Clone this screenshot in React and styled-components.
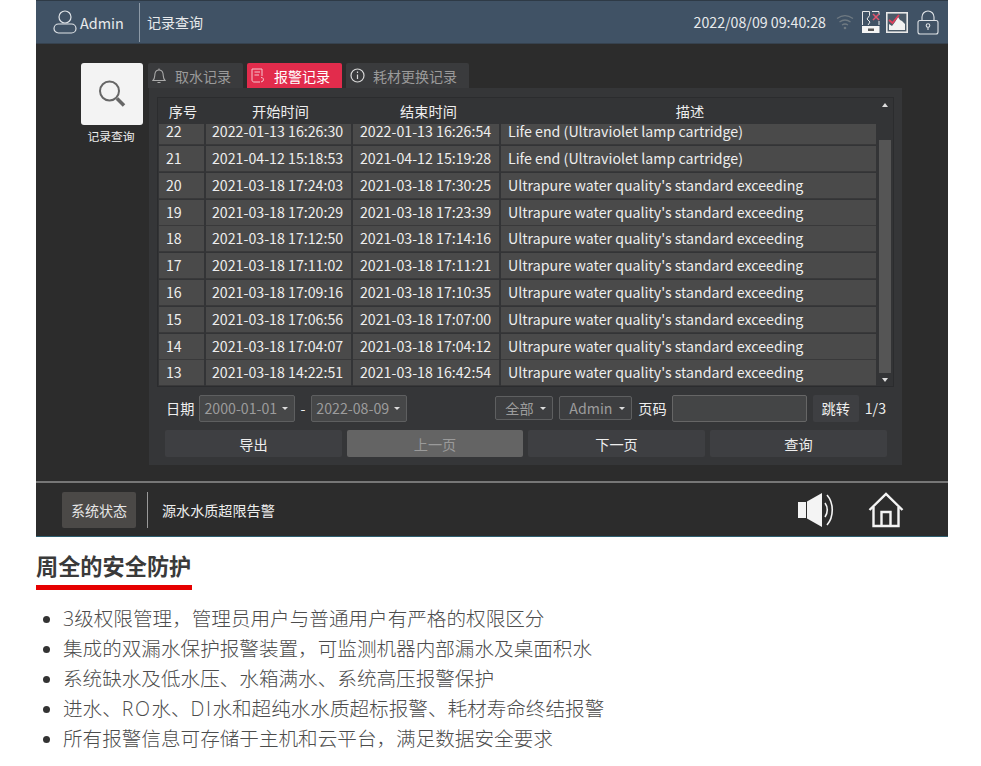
import React from "react";
import styled, { createGlobalStyle } from "styled-components";

const Global = createGlobalStyle`
  html, body { margin: 0; padding: 0; background: #fff; }
  body { font-family: "Noto Sans CJK SC", "Noto Sans", sans-serif; }
  * { box-sizing: border-box; }
`;

const Page = styled.div`width: 981px; height: 766px; overflow: hidden; background: #fff;`;
const Screen = styled.div`
  margin-left: 36px; width: 912px; height: 537px; background: #2c2c2c;
  display: flex; flex-direction: column; border-bottom: 1px solid #2f5f70;
`;
const Header = styled.header`
  height: 44px; flex: none; background: #405265; border-top: 1px solid #2e3a46; border-bottom: 1px solid #36424f;
  display: flex; align-items: center; color: #e8eaec; font-size: 14px;
`;
const UserBox = styled.div`
  width: 104px; height: 39px; padding-left: 17px; display: flex; align-items: center; gap: 3px;
  border-right: 1px solid #8d9aa7; font-size: 14.4px;
`;
const HeaderTitle = styled.div`margin-left: 7px; flex: 1; font-size: 14px;`;
const Clock = styled.div`font-size: 14.2px; margin-right: 10px;`;
const StatusIcons = styled.div`display: flex; align-items: center; margin-right: 9px;`;
const Main = styled.main`flex: 1; display: flex; padding: 19px 0 0 45px; min-height: 0;`;
const Side = styled.div`width: 62px; flex: none; display: flex; flex-direction: column; align-items: center;`;
const SearchTile = styled.div`
  width: 62px; height: 62px; background: #f3f3f3; border-radius: 3px; display: flex; align-items: center; justify-content: center;
`;
const SideLabel = styled.div`color: #eee; font-size: 11.8px; line-height: 14px; margin-top: 4px; margin-left: -2px;`;
const Content = styled.div`margin-left: 5px; width: 755px;`;
const Tabs = styled.div`display: flex; gap: 4px; height: 25px;`;
const Tab = styled.div`
  width: ${p => p.$w}px; height: 25px; border-radius: 2px 2px 0 0; display: flex; align-items: center;
  padding-left: ${p => p.$pl}px; gap: ${p => p.$gap}px;
  background: ${p => (p.$active ? "#e22c4c" : "#3a3b3d")}; color: ${p => (p.$active ? "#fff" : "#9a9a9a")};
  font-size: 14px;
`;
const Panel = styled.div`
  margin-left: 1px; width: 753px; height: 377px; background: #353638; padding: 9px 8px 0;
`;
const TableBox = styled.div`
  width: 737px; height: 290px; border: 1px solid #2b2c2e; position: relative; background: #333436;
`;
const HeadRow = styled.div`
  display: grid; grid-template-columns: 50px 145px 151px 372px; height: 26px; align-items: center; color: #eee; font-size: 14.2px; text-align: center;
`;
const Body = styled.div`display: flex; flex-direction: column; gap: 1px; padding-left: 1px;`;
const Row = styled.div`
  display: grid; grid-template-columns: 45px 145px 146px 375px; column-gap: 2px; height: ${p => p.$h}px;
`;
const Cell = styled.div`
  background: #4a4a4a; color: #eee; font-size: 14.2px; line-height: ${p => p.$lh}px; white-space: nowrap;
  padding-left: ${p => p.$pl}px; border-bottom: 1px solid #39393a;
`;
const ScrollBar = styled.div`
  position: absolute; right: 0; top: 0; bottom: 0; width: 16px; background: #333436; display: flex; flex-direction: column; align-items: center;
`;
const ScrollArrow = styled.div`
  width: 0; height: 0; margin-top: ${p => p.$up ? "5px" : "auto"}; margin-bottom: ${p => p.$up ? "0" : "4px"};
  border-left: 3.5px solid transparent; border-right: 3.5px solid transparent;
  border-${p => (p.$up ? "bottom" : "top")}: 4px solid #ddd;
`;
const Thumb = styled.div`width: 12px; height: 233px; margin-top: 33px; background: #555; flex: none;`;
const Filters = styled.div`display: flex; align-items: center; height: 30px; margin-top: 6px; padding-left: 9px; color: #eee; font-size: 14.2px;`;
const FilterLabel = styled.span`margin-left: ${p => p.$ml || 0}px; white-space: nowrap;`;
const SelectBox = styled.div`
  width: ${p => p.$w}px; height: ${p => p.$h}px; margin-left: ${p => p.$ml}px; border: 1px solid #5e5f60; border-radius: 2px;
  background: ${p => p.$bg || "#464748"}; color: #9c9c9c; font-size: 14.2px; display: flex; align-items: center; justify-content: space-between;
  padding: 0 6px 0 ${p => p.$pl || 4}px; flex: none;
`;
const Caret = styled.i`
  width: 0; height: 0; border-left: 3px solid transparent; border-right: 3px solid transparent; border-top: 3px solid #ddd;
`;
const PageInput = styled.div`
  width: 135px; height: 27px; margin-left: 5px; border: 1px solid #666; border-radius: 2px; background: #444546; flex: none;
`;
const JumpBtn = styled.div`
  width: 46px; height: 27px; margin-left: 6px; background: #3e3f42; border-radius: 2px; display: flex; align-items: center; justify-content: center; color: #eee; flex: none;
`;
const Actions = styled.div`
  display: grid; grid-template-columns: 177px 176px 177px 177px; column-gap: 5px; margin-top: 7px; padding-left: 8px; width: 737px;
`;
const ActionBtn = styled.div`
  height: 27px; border-radius: 2px; display: flex; align-items: center; justify-content: center; font-size: 14.2px;
  background: ${p => (p.$disabled ? "#646464" : "#3e3f42")}; color: ${p => (p.$disabled ? "#9a9a9a" : "#eee")};
`;
const Footer = styled.footer`
  height: 55px; flex: none; border-top: 2px solid #777; display: flex; align-items: center; padding-left: 26px; color: #eee;
`;
const StatusChip = styled.div`
  width: 74px; height: 36px; background: #4b4947; border-radius: 2px; display: flex; align-items: center; justify-content: center; font-size: 14px; color: #e6e6e6;
`;
const FooterRule = styled.div`width: 1px; height: 36px; background: #999; margin: 0 14px 0 11px;`;
const FooterText = styled.div`flex: 1; font-size: 14.1px;`;
const FooterIcons = styled.div`display: flex; align-items: center; gap: 34px; margin-right: 44px;`;
const Article = styled.section`padding: 13px 0 0 36px;`;
const Heading = styled.h2`
  display: block; margin: 0; font-size: 22.2px; font-weight: 700; line-height: 30px; color: #3a3a3a; height: 40px; border-bottom: 5px solid #e60000; width: 156px; white-space: nowrap;
`;
const List = styled.ul`margin: 14px 0 0; padding: 0 0 0 27px; list-style: disc; color: #4c4c4c; font-family: "Open Sans", "Noto Sans CJK SC", sans-serif; font-size: 19.6px; font-weight: 300; line-height: 30px;`;
const Item = styled.li`padding: 0; &::marker { font-size: 19px; color: #333; }`;
const Latin = styled.span`letter-spacing: 1.5px;`;

const UserIcon = () => (
  <svg width="24" height="26" viewBox="0 0 24 26" fill="none" stroke="#dfe3e7" strokeWidth="1.2">
    <circle cx="12" cy="8" r="6" /><rect x="1" y="15" width="22" height="9" rx="4.5" />
  </svg>
);
const SearchIcon = () => (
  <svg width="30" height="30" viewBox="0 0 30 30" fill="none" stroke="#666">
    <circle cx="12.5" cy="12" r="9.5" strokeWidth="2" /><path d="M20 19.5l7 7" strokeWidth="3.5" />
  </svg>
);
const BellIcon = () => (
  <svg width="14" height="16" viewBox="0 0 14 16" fill="none" stroke="#aaa" strokeWidth="1.1">
    <path d="M1 12.5c2-2 1.5-4 2-7C3.500 3 5 2 7 2s3.500 1 4 3.500c.5 3 0 5 2 7z" /><path d="M5.500 14.500h3M7 .5V2" />
  </svg>
);
const AlarmIcon = () => (
  <svg width="14" height="16" viewBox="0 0 14 16" fill="none" stroke="#f6c5cd" strokeWidth="1">
    <path d="M9 14H3c-1 0-2-.7-2-2V1h10v7" /><path d="M3.500 4H9M3.500 7H8M10 9.500c2.500 0 3 2 2 3.500l-2 1" />
  </svg>
);
const InfoIcon = () => (
  <svg width="15" height="15" viewBox="0 0 15 15" fill="none" stroke="#d8d8d8" strokeWidth="1.2">
    <circle cx="7.500" cy="7.500" r="6.500" /><path d="M7.500 6.500v4.500M7.500 3.500v1.500" />
  </svg>
);
const WifiIcon = () => (
  <svg width="18" height="16" viewBox="0 0 18 16" fill="none" stroke="#6f7a82" strokeWidth="1.3" style={{marginRight: 8}}>
    <path d="M1 4.500c5-3.500 11-3.500 16 0M3.500 8c3.500-2.500 7.500-2.500 11 0M6 11c2-1.300 4-1.300 6 0" /><circle cx="9" cy="14" r="1.300" fill="#6f7a82" stroke="none" />
  </svg>
);
const NetIcon = () => (
  <svg width="18" height="22" viewBox="0 0 18 22" style={{marginRight: 6}}>
    <path d="M.5 14V.5h7v4L5 8l3 3-2 3M10 .5h7V4M17 10v4" fill="none" stroke="#e8e8e8" strokeWidth="1" />
    <rect x="0" y="15" width="17.500" height="7" fill="#f4f4f4" />
    <rect x="6" y="17.500" width="6" height="2.500" fill="#555" />
    <path d="M11 3l6 6M17 3l-6 6" stroke="#e2566e" strokeWidth="1.500" />
  </svg>
);
const ChartIcon = () => (
  <svg width="22" height="21" viewBox="0 0 22 21" style={{marginRight: 9}}>
    <rect x=".8" y=".8" width="20.400" height="19.400" fill="#4b5a68" stroke="#e8e8e8" strokeWidth="1.600" />
    <path d="M3 18v-6l3 2 3-4 3-5 2 3 2 1 3 3v6z" fill="#f2f2f2" />
    <path d="M3 8l3.500 3L13 3" fill="none" stroke="#e2405c" strokeWidth="1.800" />
  </svg>
);
const LockIcon = () => (
  <svg width="22" height="25" viewBox="0 0 22 25" fill="none" stroke="#dfe3e7" strokeWidth="1.100">
    <rect x="1" y="10.500" width="20" height="13.500" rx="2" />
    <path d="M5 10.500V7a6 6 0 0 1 12 0v3.500" />
    <circle cx="11" cy="15.500" r="1.800" /><path d="M11 17.300v2.700" />
  </svg>
);
const SpeakerIcon = () => (
  <svg width="36" height="36" viewBox="0 0 36 36" fill="none">
    <path d="M0 10h8v16H0zM9 9.500L24 1v34L9 26.500z" fill="#f4f4f4" />
    <path d="M27 11c3 4 3 10 0 14" stroke="#f4f4f4" strokeWidth="1.600" />
    <path d="M29 3c7 8 7 22 0 30" stroke="#f4f4f4" strokeWidth="1.600" />
  </svg>
);
const HomeIcon = () => (
  <svg width="36" height="36" viewBox="0 0 36 36" fill="none" stroke="#f4f4f4" strokeWidth="2.400">
    <path d="M1.500 18L18 2l16.500 16" /><path d="M5.500 15v19h25V15" /><path d="M13.500 34V20h9v14" />
  </svg>
);

const rows = [
  [22, "2022-01-13 16:26:30", "2022-01-13 16:26:54", "Life end (Ultraviolet lamp cartridge)"],
  [21, "2021-04-12 15:18:53", "2021-04-12 15:19:28", "Life end (Ultraviolet lamp cartridge)"],
  [20, "2021-03-18 17:24:03", "2021-03-18 17:30:25"],
  [19, "2021-03-18 17:20:29", "2021-03-18 17:23:39"],
  [18, "2021-03-18 17:12:50", "2021-03-18 17:14:16"],
  [17, "2021-03-18 17:11:02", "2021-03-18 17:11:21"],
  [16, "2021-03-18 17:09:16", "2021-03-18 17:10:35"],
  [15, "2021-03-18 17:06:56", "2021-03-18 17:07:00"],
  [14, "2021-03-18 17:04:07", "2021-03-18 17:04:12"],
  [13, "2021-03-18 14:22:51", "2021-03-18 16:42:54"],
];
const exceed = "Ultrapure water quality's standard exceeding";

export default function App() {
  return (
    <Page>
      <Global />
      <Screen>
        <Header>
          <UserBox><UserIcon />Admin</UserBox>
          <HeaderTitle>记录查询</HeaderTitle>
          <Clock>2022/08/09 09:40:28</Clock>
          <StatusIcons><WifiIcon /><NetIcon /><ChartIcon /><LockIcon /></StatusIcons>
        </Header>
        <Main>
          <Side>
            <SearchTile><SearchIcon /></SearchTile>
            <SideLabel>记录查询</SideLabel>
          </Side>
          <Content>
            <Tabs>
              <Tab $w={95} $pl={4} $gap={9}><BellIcon />取水记录</Tab>
              <Tab $w={95} $pl={4} $gap={9} $active><AlarmIcon />报警记录</Tab>
              <Tab $w={123} $pl={4} $gap={8}><InfoIcon />耗材更换记录</Tab>
            </Tabs>
            <Panel>
              <TableBox>
                <HeadRow><span>序号</span><span>开始时间</span><span>结束时间</span><span>描述</span></HeadRow>
                <Body>
                  {rows.map((r, i) => (
                    <Row key={r[0]} $h={i === 0 ? 21 : 25.8}>
                      <Cell $pl={7} $lh={i === 0 ? 15 : 25}>{r[0]}</Cell>
                      <Cell $pl={6} $lh={i === 0 ? 15 : 25}>{r[1]}</Cell>
                      <Cell $pl={7} $lh={i === 0 ? 15 : 25}>{r[2]}</Cell>
                      <Cell $pl={7} $lh={i === 0 ? 15 : 25}>{r[3] || exceed}</Cell>
                    </Row>
                  ))}
                </Body>
                <ScrollBar>
                  <ScrollArrow $up />
                  <Thumb />
                  <ScrollArrow />
                </ScrollBar>
              </TableBox>
              <Filters>
                <FilterLabel>日期</FilterLabel>
                <SelectBox $w={96} $h={27} $ml={5}>2000-01-01<Caret /></SelectBox>
                <FilterLabel $ml={5}>-</FilterLabel>
                <SelectBox $w={96} $h={27} $ml={6}>2022-08-09<Caret /></SelectBox>
                <SelectBox $w={58} $h={24} $ml={88} $pl={9} $bg="#3d3e40">全部<Caret /></SelectBox>
                <SelectBox $w={73} $h={24} $ml={6} $pl={9} $bg="#3d3e40">Admin<Caret /></SelectBox>
                <FilterLabel $ml={6}>页码</FilterLabel>
                <PageInput />
                <JumpBtn>跳转</JumpBtn>
                <FilterLabel $ml={6}>1/3</FilterLabel>
              </Filters>
              <Actions>
                <ActionBtn>导出</ActionBtn>
                <ActionBtn $disabled>上一页</ActionBtn>
                <ActionBtn>下一页</ActionBtn>
                <ActionBtn>查询</ActionBtn>
              </Actions>
            </Panel>
          </Content>
        </Main>
        <Footer>
          <StatusChip>系统状态</StatusChip>
          <FooterRule />
          <FooterText>源水水质超限告警</FooterText>
          <FooterIcons><SpeakerIcon /><HomeIcon /></FooterIcons>
        </Footer>
      </Screen>
      <Article>
        <Heading>周全的安全防护</Heading>
        <List>
          <Item>3级权限管理，管理员用户与普通用户有严格的权限区分</Item>
          <Item>集成的双漏水保护报警装置，可监测机器内部漏水及桌面积水</Item>
          <Item>系统缺水及低水压、水箱满水、系统高压报警保护</Item>
          <Item>进水、<Latin>RO</Latin>水、<Latin>DI</Latin>水和超纯水水质超标报警、耗材寿命终结报警</Item>
          <Item>所有报警信息可存储于主机和云平台，满足数据安全要求</Item>
        </List>
      </Article>
    </Page>
  );
}
